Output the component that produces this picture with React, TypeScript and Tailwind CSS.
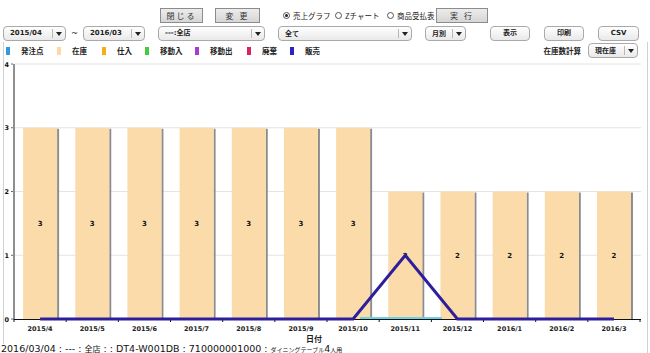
import React from "react";

const cjk = "font-['Noto_Sans_CJK_JP',sans-serif]";
const dv = "font-['DejaVu_Sans','Noto_Sans_CJK_JP',sans-serif]";

function Tri() {
  return <span className="block h-0 w-0 border-x-[3px] border-t-[4px] border-x-transparent border-t-[#222]" />;
}

function Sel({ w, label, tw }: { w: string; label: string; tw?: string }) {
  return (
    <div className={`flex h-[15px] items-center rounded-[4px] border border-[#a9a9a9] bg-linear-to-b from-white to-[#e9e9e9] ${w}`}>
      <span className={`flex-1 whitespace-nowrap pl-[6px] text-[7px] font-bold leading-none text-[#222] ${tw ?? dv}`}>{label}</span>
      <span className="h-[9px] w-px bg-[#b8b8b8]" />
      <span className="flex w-[12px] justify-center"><Tri /></span>
    </div>
  );
}

function RBtn({ w, label }: { w: string; label: string }) {
  return (
    <div className={`flex h-[15px] items-center justify-center rounded-[4px] border border-[#a9a9a9] bg-linear-to-b from-white to-[#e9e9e9] text-[7px] font-bold leading-none text-[#222] ${dv} ${w}`}>
      {label}
    </div>
  );
}

function GBtn({ w, label }: { w: string; label: string }) {
  return (
    <div className={`flex h-[15px] items-center justify-center border border-[#8c8c8c] bg-linear-to-b from-[#ececec] to-[#d6d6d6] text-[8px] leading-none tracking-[2px] text-[#333] ${cjk} ${w}`}>
      {label}
    </div>
  );
}

function Radio({ on }: { on?: boolean }) {
  return (
    <span className="flex h-[7px] w-[7px] items-center justify-center rounded-full border border-[#555] bg-white">
      {on && <span className="h-[3px] w-[3px] rounded-full bg-[#222]" />}
    </span>
  );
}

const legend = [
  { c: "bg-[#3399dd]", t: "発注点", w: "w-[51px]" },
  { c: "bg-[#fbd8a6]", t: "在庫", w: "w-[45px]" },
  { c: "bg-[#f3ae1c]", t: "仕入", w: "w-[43px]" },
  { c: "bg-[#3fcc3f]", t: "移動入", w: "w-[50px]" },
  { c: "bg-[#a93ad0]", t: "移動出", w: "w-[52px]" },
  { c: "bg-[#d92464]", t: "廃棄", w: "w-[43px]" },
  { c: "bg-[#2a22c4]", t: "販売", w: "w-[40px]" },
];

const cats = ["2015/4", "2015/5", "2015/6", "2015/7", "2015/8", "2015/9", "2015/10", "2015/11", "2015/12", "2016/1", "2016/2", "2016/3"];
const stock = [3, 3, 3, 3, 3, 3, 3, 2, 2, 2, 2, 2];
const sales = [0, 0, 0, 0, 0, 0, 0, 1, 0, 0, 0, 0];

const X0 = 14;
const STEP = 52.17;
const Y0 = 318;
const UNIT = 63.75;
const cx = (i: number) => X0 + STEP * (i + 0.5);
const yv = (v: number) => Y0 - UNIT * v;

function Chart() {
  const linePts = sales.map((v, i) => `${cx(i)},${yv(v)}`).join(" ");
  return (
    <svg width={643} height={285} viewBox="4 58 643 285" className="block">
      {[1, 2, 3, 4].map((v) => (
        <line key={v} x1={X0} x2={641} y1={yv(v)} y2={yv(v)} stroke="#e4e4e4" strokeWidth={1} />
      ))}
      {stock.map((v, i) => (
        <g key={i}>
          <rect x={cx(i) + 17} y={yv(v) + 1} width={2} height={Y0 - yv(v) - 1} fill="#8c8c8c" />
          <rect x={cx(i) - 17} y={yv(v)} width={34} height={Y0 - yv(v)} fill="#fcdbab" />
          <text x={cx(i)} y={(yv(v) + Y0) / 2 + 2.5} textAnchor="middle" fontSize={7} fontWeight="bold" fontFamily="DejaVu Sans" fill="#111">
            {v}
          </text>
        </g>
      ))}
      <rect x={13} y={63} width={2} height={256} fill="#8f8f8f" />
      <line x1={X0} x2={641} y1={Y0 + 0.5} y2={Y0 + 0.5} stroke="#111" strokeWidth={1} />
      {Array.from({ length: 13 }).map((_, i) => (
        <line key={i} x1={X0 + STEP * i} x2={X0 + STEP * i} y1={Y0} y2={Y0 + 3} stroke="#111" strokeWidth={1} />
      ))}
      {[0, 1, 2, 3, 4].map((v) => (
        <g key={v}>
          <text x={9} y={yv(v) + 2.5} textAnchor="end" fontSize={6.5} fontWeight="bold" fontFamily="DejaVu Sans" fill="#111">
            {v}
          </text>
          <line x1={11} x2={13} y1={yv(v)} y2={yv(v)} stroke="#666" strokeWidth={1} />
        </g>
      ))}
      <line x1={360} x2={442} y1={317} y2={317} stroke="#6fd0e0" strokeWidth={2} />
      <polyline points={linePts} fill="none" stroke="#2d1f9b" strokeWidth={3} strokeLinejoin="miter" />
      {cats.map((c, i) => (
        <text key={c} x={cx(i)} y={330} textAnchor="middle" fontSize={6.5} fontWeight="bold" fontFamily="DejaVu Sans" fill="#222">
          {c}
        </text>
      ))}
      <text x={314} y={341} textAnchor="middle" fontSize={8} fontWeight="bold" fontFamily="Noto Sans CJK JP" fill="#222">
        日付
      </text>
    </svg>
  );
}

export default function App() {
  return (
    <div className="h-[353px] w-[650px] overflow-hidden bg-white text-[#222]">
      {/* row 1 */}
      <div className="mt-[8px] flex h-[15px] items-center pl-[160px]">
        <GBtn w="w-[43px]" label="閉じる" />
        <div className="w-[12px]" />
        <GBtn w="w-[45px]" label="変 更" />
        <div className={`ml-[23px] flex items-center text-[7.5px] leading-none text-[#222] ${cjk}`}>
          <Radio on />
          <span className="ml-[3px] w-[42px] whitespace-nowrap">売上グラフ</span>
          <Radio />
          <span className="ml-[3px] w-[42px] whitespace-nowrap">Zチャート</span>
          <Radio />
          <span className="ml-[3px] w-[39px] whitespace-nowrap">商品受払表</span>
        </div>
        <GBtn w="w-[52px]" label="実 行" />
      </div>
      {/* row 2 */}
      <div className="mt-[3px] flex h-[15px] items-center pl-[3px]">
        <Sel w="w-[63px]" label="2015/04" />
        <span className={`w-[17px] text-center text-[8px] leading-none ${dv}`}>~</span>
        <Sel w="w-[62px]" label="2016/03" />
        <div className="w-[13px]" />
        <Sel w="w-[107px]" label="---:全店" />
        <div className="w-[13px]" />
        <Sel w="w-[134px]" label="全て" tw={cjk} />
        <div className="w-[13px]" />
        <Sel w="w-[41px]" label="月別" tw={cjk} />
        <div className="w-[24px]" />
        <RBtn w="w-[40px]" label="表示" />
        <div className="w-[14px]" />
        <RBtn w="w-[40px]" label="印刷" />
        <div className="w-[14px]" />
        <RBtn w="w-[41px]" label="CSV" />
      </div>
      {/* chart panel */}
      <div className="mx-[3px] mt-[1px] w-[645px] border-x border-[#d0d0d0]">
        <div className="flex h-[17px] items-center">
          <div className="flex items-center pl-[2px]">
            {legend.map((l) => (
              <div key={l.t} className={`flex items-center ${l.w}`}>
                <span className={`h-[8px] w-[4px] ${l.c}`} />
                <span className={`ml-[11px] whitespace-nowrap text-[7.5px] font-bold leading-none ${cjk}`}>{l.t}</span>
              </div>
            ))}
          </div>
          <div className="ml-auto flex items-center pr-[9px]">
            <span className={`mr-[7px] whitespace-nowrap text-[7.5px] font-bold leading-none ${cjk}`}>在庫数計算</span>
            <Sel w="w-[50px]" label="現在庫" tw={cjk} />
          </div>
        </div>
        <Chart />
      </div>
      <div className="ml-[1px] flex h-[10px] w-[647px] items-center border-r border-b border-[#d0d0d0]">
        <span className={`whitespace-nowrap text-[9.5px] leading-none text-[#111] ${dv}`}>
          2016/03/04 : --- : <span className="text-[8px]">全店</span> : : DT4-W001DB : 710000001000 : <span className="text-[6px]">ダイニングテーブル</span>4<span className="text-[6px]">人用</span>
        </span>
      </div>
    </div>
  );
}
